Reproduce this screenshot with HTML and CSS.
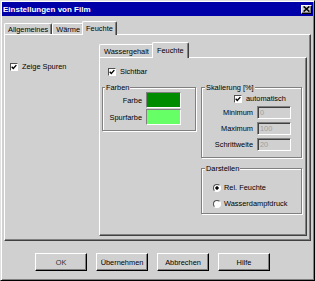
FILE: index.html
```html
<!DOCTYPE html>
<html lang="de">
<head>
    <meta charset="UTF-8">
    <meta name="viewport" content="width=device-width, initial-scale=1.0">
    <title>Einstellungen von Film</title>
    <link rel="stylesheet" href="styles.css">
</head>
<body>
    <div class="window">
        <div class="titlebar">
            <span class="title">Einstellungen von Film</span>
            <span class="close">
                <svg width="7" height="6" viewBox="0 0 7 6"><path d="M0.6 0.4 L6.4 5.6 M6.4 0.4 L0.6 5.6" stroke="#000" stroke-width="1.5" fill="none"/></svg>
            </span>
        </div>

        <!-- Reiter oben -->
        <div class="tabs main-tabs">
            <div class="tab">Allgemeines</div>
            <div class="tab">Wärme</div>
            <div class="tab active">Feuchte</div>
        </div>

        <div class="panel main-panel">
            <div class="left-col">
                <div class="check">
                    <span class="box"><svg width="6" height="6" viewBox="0 0 6 6"><path d="M0.7 2.7 L2.3 4.4 L5.3 1.1" stroke="#000" stroke-width="1.4" fill="none"/></svg></span>
                    Zeige Spuren
                </div>
            </div>

            <div class="subtabs">
                <div class="tabs sub-tabs">
                    <div class="tab">Wassergehalt</div>
                    <div class="tab active">Feuchte</div>
                </div>
                <div class="panel sub-panel">
                    <div class="check sichtbar">
                        <span class="box"><svg width="6" height="6" viewBox="0 0 6 6"><path d="M0.7 2.7 L2.3 4.4 L5.3 1.1" stroke="#000" stroke-width="1.4" fill="none"/></svg></span>
                        Sichtbar
                    </div>

                    <div class="groups">
                        <div class="group farben">
                            <div class="legend">Farben</div>
                            <div class="color-grid">
                                <span class="lbl">Farbe</span><span class="swatch dark"></span>
                                <span class="lbl">Spurfarbe</span><span class="swatch light"></span>
                            </div>
                        </div>

                        <div class="group-col">
                            <div class="group skalierung">
                                <div class="legend">Skalierung [%]</div>
                                <div class="check auto">
                                    <span class="box"><svg width="6" height="6" viewBox="0 0 6 6"><path d="M0.7 2.7 L2.3 4.4 L5.3 1.1" stroke="#000" stroke-width="1.4" fill="none"/></svg></span>
                                    automatisch
                                </div>
                                <div class="field-grid">
                                    <span class="lbl">Minimum</span><input class="field" type="text" value="0" disabled>
                                    <span class="lbl">Maximum</span><input class="field" type="text" value="100" disabled>
                                    <span class="lbl">Schrittweite</span><input class="field" type="text" value="20" disabled>
                                </div>
                            </div>

                            <div class="group darstellen">
                                <div class="legend">Darstellen</div>
                                <div class="radio first"><span class="dot checked"></span>Rel. Feuchte</div>
                                <div class="radio"><span class="dot"></span>Wasserdampfdruck</div>
                            </div>
                        </div>
                    </div>
                </div>
            </div>
        </div>

        <div class="buttons">
            <button class="btn ok">OK</button>
            <button class="btn">Übernehmen</button>
            <button class="btn">Abbrechen</button>
            <button class="btn">Hilfe</button>
        </div>
    </div>
</body>
</html>
```

FILE: styles.css
```css
* {
    box-sizing: border-box;
}

body {
    margin: 0;
    background: #d0d0d0;
    font-family: "Liberation Sans", Arial, sans-serif;
    font-size: 7.4px;
    color: #000;
}

/* Fensterrahmen */
.window {
    width: 315px;
    height: 281px;
    padding: 1px;
    border: 1px solid;
    border-color: #e0e0e0 #000 #000 #e0e0e0;
    box-shadow: inset 1px 1px #fff, inset -1px -1px #808080;
    background: #d0d0d0;
}

.titlebar {
    height: 14px;
    padding: 0 1px;
    background: #0000a8;
    color: #fff;
    display: flex;
    align-items: center;
    justify-content: space-between;
}

.title {
    font-size: 8px;
    font-weight: bold;
}

.close {
    width: 11px;
    height: 9px;
    background: #d0d0d0;
    border: 1px solid;
    border-color: #fff #000 #000 #fff;
    box-shadow: inset -1px -1px #808080;
    display: flex;
    align-items: center;
    justify-content: center;
}

/* Reiter */
.tabs {
    display: flex;
    align-items: flex-end;
}

.main-tabs {
    height: 13px;
    margin: 5px 2px 0;
}

.tab {
    height: 11px;
    padding: 1px 3px 0;
    border: 1px solid;
    border-bottom: 0;
    border-color: #fff #404040 #fff #fff;
    border-radius: 2px 2px 0 0;
    box-shadow: inset -1px 0 #808080;
    line-height: 9px;
    white-space: nowrap;
    background: #d0d0d0;
}

.tab.active {
    height: 14px;
    padding-top: 2px;
    margin: 0 -2px -1px;
    position: relative;
    z-index: 1;
}

.panel {
    border: 1px solid;
    border-color: #fff #404040 #404040 #fff;
    box-shadow: inset -1px -1px #808080;
}

.main-panel {
    height: 207px;
    margin: 0 2px;
    padding-top: 7px;
    display: flex;
}

.left-col {
    width: 94px;
    padding: 20px 0 0 5px;
}

.subtabs {
    width: 208px;
}

.sub-tabs {
    height: 15px;
}

.sub-tabs .tab {
    height: 13px;
    padding: 2px 4px 0;
}

.sub-tabs .tab.active {
    height: 16px;
    padding-top: 3px;
}

.sub-panel {
    height: 179px;
    padding-left: 1px;
}

/* Checkboxen */
.check {
    display: flex;
    align-items: center;
    gap: 4px;
    height: 9px;
    line-height: 9px;
    white-space: nowrap;
}

.box {
    width: 8px;
    height: 8px;
    border: 1px solid;
    border-color: #505050 #fff #fff #505050;
    background: #fff;
    display: flex;
    align-items: center;
    justify-content: center;
}

.sichtbar {
    margin: 9px 0 0 7px;
}

/* Gruppen */
.groups {
    display: flex;
    gap: 5px;
    margin: 11px 0 0 1px;
}

.group {
    border: 1px solid #808080;
    box-shadow: inset 1px 1px #fff, 1px 1px #fff;
}

.legend {
    width: max-content;
    height: 9px;
    line-height: 9px;
    margin: -5px 0 0 2px;
    padding: 0 1px;
    background: #d0d0d0;
}

.farben {
    width: 94px;
    height: 44px;
}

.color-grid {
    display: grid;
    grid-template-columns: 38px 35px;
    grid-auto-rows: 16px;
    column-gap: 4px;
    row-gap: 1px;
    margin-left: 1px;
}

.lbl {
    justify-self: end;
    align-self: center;
    line-height: 9px;
    white-space: nowrap;
}

.swatch {
    border: 1px solid;
    border-color: #808080 #fff #fff #808080;
}

.swatch.dark {
    background: #008c00;
}

.swatch.light {
    background: #66ff66;
}

.group-col {
    display: flex;
    flex-direction: column;
    gap: 10px;
}

.skalierung {
    width: 101px;
    height: 71px;
}

.skalierung .legend {
    margin-left: 3px;
}

.auto {
    margin: 2px 0 0 32px;
}

.field-grid {
    display: grid;
    grid-template-columns: 51px 34px;
    grid-auto-rows: 13px;
    column-gap: 4px;
    row-gap: 3px;
    margin-top: 3px;
}

.field {
    width: 34px;
    height: 13px;
    margin: 0;
    padding: 0 2px;
    font: inherit;
    color: #a0a0a0;
    background: #d0d0d0;
    border: 1px solid;
    border-color: #808080 #fff #fff #808080;
    box-shadow: inset 1px 1px #404040;
}

.darstellen {
    width: 101px;
    height: 46px;
}

.darstellen .legend {
    margin-left: 3px;
}

/* Optionsfelder */
.radio {
    display: flex;
    align-items: center;
    gap: 3px;
    height: 9px;
    line-height: 9px;
    margin: 7px 0 0 11px;
    white-space: nowrap;
}

.radio.first {
    margin-top: 10px;
}

.dot {
    width: 8px;
    height: 8px;
    border-radius: 50%;
    border: 1px solid;
    border-color: #505050 #fff #fff #505050;
    background: #fff;
}

.dot.checked {
    background: radial-gradient(circle, #000 0 1.4px, #fff 1.9px);
}

/* Knöpfe unten */
.buttons {
    display: flex;
    gap: 9px;
    margin-top: 12px;
    padding-left: 33px;
}

.btn {
    width: 52px;
    height: 18px;
    padding: 0;
    font: inherit;
    color: #000;
    background: #d0d0d0;
    border: 1px solid;
    border-color: #fff #000 #000 #fff;
    box-shadow: inset -1px -1px #808080;
}

.btn.ok {
    color: #333;
}
```
